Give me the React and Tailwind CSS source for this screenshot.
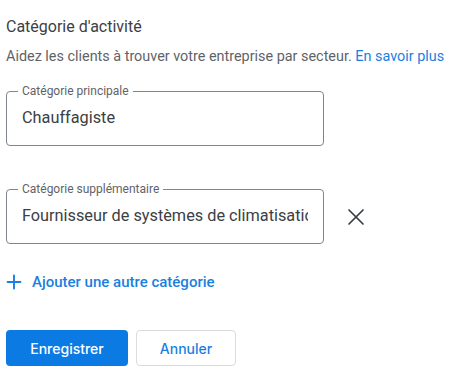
import React from 'react'
import { X, Plus } from 'lucide-react'

const OutlinedField = ({ label, value }) => {
  return (
    <div className="relative w-[318px] h-[55px] border border-[#80868b] rounded-[4px] flex items-center px-[15px]">
      <span className="absolute -top-[9px] left-[11px] bg-white px-[4px] text-[12px] leading-[16px] text-[#5f6368]">{label}</span>
      <span className="min-w-0 text-[16.3px] text-[#3c4043] whitespace-nowrap overflow-hidden">{value}</span>
    </div>
  )
}

const App = () => {
  return (
    <div className="w-[473px] h-[376px] bg-white px-[6px] pt-[15px] font-['Roboto',sans-serif] overflow-hidden">
      <h1 className="text-[16px] leading-[24px] text-[#3c4043]">Catégorie d'activité</h1>
      <p className="mt-[8px] text-[14.4px] leading-[20px] text-[#5f6368] whitespace-nowrap">
        Aidez les clients à trouver votre entreprise par secteur. <span className="text-[#1a7fe0]">En savoir plus</span>
      </p>

      <div className="mt-[24px]">
        <OutlinedField label="Catégorie principale" value="Chauffagiste" />
      </div>

      <div className="mt-[43px] flex items-center gap-[18px]">
        <OutlinedField label="Catégorie supplémentaire" value="Fournisseur de systèmes de climatisation" />
        <X size={28} strokeWidth={1.5} className="text-[#3c4043]" />
      </div>

      <div className="mt-[28px] flex items-center h-[20px] text-[#1a7fe0]">
        <Plus size={22} strokeWidth={2.1} className="-ml-[3px]" />
        <span className="ml-[7px] text-[15px] font-medium">Ajouter une autre catégorie</span>
      </div>

      <div className="mt-[38px] flex gap-[8px] font-['Inter',sans-serif]">
        <button className="w-[122px] h-[36px] rounded-[4px] bg-[#0b7be3] text-white text-[14px] font-medium">Enregistrer</button>
        <button className="w-[100px] h-[36px] rounded-[4px] bg-white border border-[#dadce0] text-[#1a7fe0] text-[14px] font-medium">Annuler</button>
      </div>
    </div>
  )
}

export default App
